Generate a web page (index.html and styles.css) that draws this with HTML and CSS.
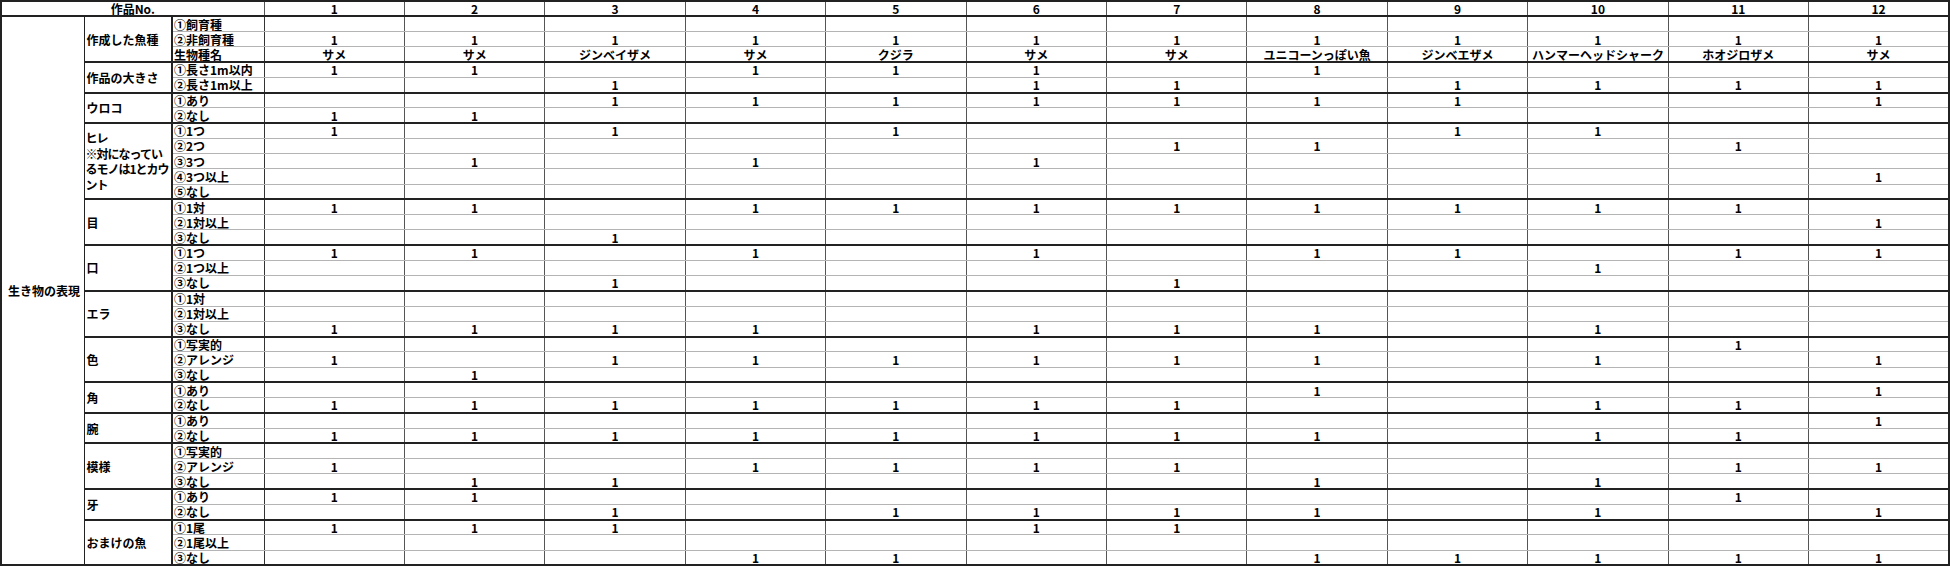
FILE: index.html
```html
<!DOCTYPE html>
<html lang="ja">
<head>
<meta charset="utf-8">
<title>作品集計表</title>
<link rel="stylesheet" href="styles.css">
</head>
<body>
<table class="sheet">
<colgroup>
<col class="c-cat"><col class="c-item"><col class="c-opt">
<col><col><col><col><col><col><col><col><col><col><col><col>
</colgroup>
<thead>
<tr class="hdr"><th colspan="3">作品No.</th><th>1</th><th>2</th><th>3</th><th>4</th><th>5</th><th>6</th><th>7</th><th>8</th><th>9</th><th>10</th><th>11</th><th>12</th></tr>
</thead>
<tbody>
<tr class="g"><th rowspan="36" class="cat">生き物の表現</th><th rowspan="3" class="item">作成した魚種</th><td class="opt">①飼育種</td><td></td><td></td><td></td><td></td><td></td><td></td><td></td><td></td><td></td><td></td><td></td><td></td></tr>
<tr><td class="opt">②非飼育種</td><td>1</td><td>1</td><td>1</td><td>1</td><td>1</td><td>1</td><td>1</td><td>1</td><td>1</td><td>1</td><td>1</td><td>1</td></tr>
<tr><td class="opt">生物種名</td><td>サメ</td><td>サメ</td><td>ジンベイザメ</td><td>サメ</td><td>クジラ</td><td>サメ</td><td>サメ</td><td>ユニコーンっぽい魚</td><td>ジンベエザメ</td><td>ハンマーヘッドシャーク</td><td>ホオジロザメ</td><td>サメ</td></tr>

<tr class="g"><th rowspan="2" class="item">作品の大きさ</th><td class="opt">①長さ1m以内</td><td>1</td><td>1</td><td></td><td>1</td><td>1</td><td>1</td><td></td><td>1</td><td></td><td></td><td></td><td></td></tr>
<tr><td class="opt">②長さ1m以上</td><td></td><td></td><td>1</td><td></td><td></td><td>1</td><td>1</td><td></td><td>1</td><td>1</td><td>1</td><td>1</td></tr>

<tr class="g"><th rowspan="2" class="item">ウロコ</th><td class="opt">①あり</td><td></td><td></td><td>1</td><td>1</td><td>1</td><td>1</td><td>1</td><td>1</td><td>1</td><td></td><td></td><td>1</td></tr>
<tr><td class="opt">②なし</td><td>1</td><td>1</td><td></td><td></td><td></td><td></td><td></td><td></td><td></td><td></td><td></td><td></td></tr>

<tr class="g"><th rowspan="5" class="item wrap">ヒレ<br>※対になってい<br>るモノは1とカウ<br>ント</th><td class="opt">①1つ</td><td>1</td><td></td><td>1</td><td></td><td>1</td><td></td><td></td><td></td><td>1</td><td>1</td><td></td><td></td></tr>
<tr><td class="opt">②2つ</td><td></td><td></td><td></td><td></td><td></td><td></td><td>1</td><td>1</td><td></td><td></td><td>1</td><td></td></tr>
<tr><td class="opt">③3つ</td><td></td><td>1</td><td></td><td>1</td><td></td><td>1</td><td></td><td></td><td></td><td></td><td></td><td></td></tr>
<tr><td class="opt">④3つ以上</td><td></td><td></td><td></td><td></td><td></td><td></td><td></td><td></td><td></td><td></td><td></td><td>1</td></tr>
<tr><td class="opt">⑤なし</td><td></td><td></td><td></td><td></td><td></td><td></td><td></td><td></td><td></td><td></td><td></td><td></td></tr>

<tr class="g"><th rowspan="3" class="item">目</th><td class="opt">①1対</td><td>1</td><td>1</td><td></td><td>1</td><td>1</td><td>1</td><td>1</td><td>1</td><td>1</td><td>1</td><td>1</td><td></td></tr>
<tr><td class="opt">②1対以上</td><td></td><td></td><td></td><td></td><td></td><td></td><td></td><td></td><td></td><td></td><td></td><td>1</td></tr>
<tr><td class="opt">③なし</td><td></td><td></td><td>1</td><td></td><td></td><td></td><td></td><td></td><td></td><td></td><td></td><td></td></tr>

<tr class="g"><th rowspan="3" class="item">口</th><td class="opt">①1つ</td><td>1</td><td>1</td><td></td><td>1</td><td></td><td>1</td><td></td><td>1</td><td>1</td><td></td><td>1</td><td>1</td></tr>
<tr><td class="opt">②1つ以上</td><td></td><td></td><td></td><td></td><td></td><td></td><td></td><td></td><td></td><td>1</td><td></td><td></td></tr>
<tr><td class="opt">③なし</td><td></td><td></td><td>1</td><td></td><td></td><td></td><td>1</td><td></td><td></td><td></td><td></td><td></td></tr>

<tr class="g"><th rowspan="3" class="item">エラ</th><td class="opt">①1対</td><td></td><td></td><td></td><td></td><td></td><td></td><td></td><td></td><td></td><td></td><td></td><td></td></tr>
<tr><td class="opt">②1対以上</td><td></td><td></td><td></td><td></td><td></td><td></td><td></td><td></td><td></td><td></td><td></td><td></td></tr>
<tr><td class="opt">③なし</td><td>1</td><td>1</td><td>1</td><td>1</td><td></td><td>1</td><td>1</td><td>1</td><td></td><td>1</td><td></td><td></td></tr>

<tr class="g"><th rowspan="3" class="item">色</th><td class="opt">①写実的</td><td></td><td></td><td></td><td></td><td></td><td></td><td></td><td></td><td></td><td></td><td>1</td><td></td></tr>
<tr><td class="opt">②アレンジ</td><td>1</td><td></td><td>1</td><td>1</td><td>1</td><td>1</td><td>1</td><td>1</td><td></td><td>1</td><td></td><td>1</td></tr>
<tr><td class="opt">③なし</td><td></td><td>1</td><td></td><td></td><td></td><td></td><td></td><td></td><td></td><td></td><td></td><td></td></tr>

<tr class="g"><th rowspan="2" class="item">角</th><td class="opt">①あり</td><td></td><td></td><td></td><td></td><td></td><td></td><td></td><td>1</td><td></td><td></td><td></td><td>1</td></tr>
<tr><td class="opt">②なし</td><td>1</td><td>1</td><td>1</td><td>1</td><td>1</td><td>1</td><td>1</td><td></td><td></td><td>1</td><td>1</td><td></td></tr>

<tr class="g"><th rowspan="2" class="item">腕</th><td class="opt">①あり</td><td></td><td></td><td></td><td></td><td></td><td></td><td></td><td></td><td></td><td></td><td></td><td>1</td></tr>
<tr><td class="opt">②なし</td><td>1</td><td>1</td><td>1</td><td>1</td><td>1</td><td>1</td><td>1</td><td>1</td><td></td><td>1</td><td>1</td><td></td></tr>

<tr class="g"><th rowspan="3" class="item">模様</th><td class="opt">①写実的</td><td></td><td></td><td></td><td></td><td></td><td></td><td></td><td></td><td></td><td></td><td></td><td></td></tr>
<tr><td class="opt">②アレンジ</td><td>1</td><td></td><td></td><td>1</td><td>1</td><td>1</td><td>1</td><td></td><td></td><td></td><td>1</td><td>1</td></tr>
<tr><td class="opt">③なし</td><td></td><td>1</td><td>1</td><td></td><td></td><td></td><td></td><td>1</td><td></td><td>1</td><td></td><td></td></tr>

<tr class="g"><th rowspan="2" class="item">牙</th><td class="opt">①あり</td><td>1</td><td>1</td><td></td><td></td><td></td><td></td><td></td><td></td><td></td><td></td><td>1</td><td></td></tr>
<tr><td class="opt">②なし</td><td></td><td></td><td>1</td><td></td><td>1</td><td>1</td><td>1</td><td>1</td><td></td><td>1</td><td></td><td>1</td></tr>

<tr class="g"><th rowspan="3" class="item">おまけの魚</th><td class="opt">①1尾</td><td>1</td><td>1</td><td>1</td><td></td><td></td><td>1</td><td>1</td><td></td><td></td><td></td><td></td><td></td></tr>
<tr><td class="opt">②1尾以上</td><td></td><td></td><td></td><td></td><td></td><td></td><td></td><td></td><td></td><td></td><td></td><td></td></tr>
<tr><td class="opt">③なし</td><td></td><td></td><td></td><td>1</td><td>1</td><td></td><td></td><td>1</td><td>1</td><td>1</td><td>1</td><td>1</td></tr>
</tbody>
</table>
</body>
</html>
```

FILE: styles.css
```css
html, body {
  margin: 0;
  padding: 0;
  background: #fff;
}

.sheet {
  border-collapse: collapse;
  table-layout: fixed;
  width: 1950px;
  font-family: "Noto Sans CJK JP", "Noto Sans", sans-serif;
  font-weight: 700;
  font-size: 12px;
  color: #000;
  border: 2px solid #222;
}

.c-cat { width: 83px; }
.c-item { width: 88px; }
.c-opt { width: 92px; }

.sheet tr {
  height: 15.25px;
}

.sheet th,
.sheet td {
  padding: 0 2px;
  line-height: 13px;
  white-space: nowrap;
  overflow: hidden;
  text-align: center;
  vertical-align: middle;
  font-weight: 700;
  border-top: 1px solid #b4b4b4;
  border-bottom: 1px solid #b4b4b4;
  border-left: 1px solid #555;
  border-right: 1px solid #555;
}

.hdr th {
  border-top: 1px solid #222;
  border-bottom: 2px solid #222;
}

.g > th,
.g > td {
  border-top: 2px solid #222;
}

.sheet .cat {
  text-align: left;
  padding-left: 6px;
  border: 2px solid #222;
  border-right: 1px solid #222;
}

.sheet .item {
  text-align: left;
  padding-left: 2px;
  border-bottom: 2px solid #222;
  border-left: 1px solid #222;
  border-right: 2px solid #222;
}

.sheet .item.wrap {
  line-height: 15.5px;
  letter-spacing: -1px;
  padding-left: 1px;
  padding-right: 0;
}

.sheet .opt {
  text-align: left;
  padding-left: 1px;
  border-right: 1px solid #333;
}
```
